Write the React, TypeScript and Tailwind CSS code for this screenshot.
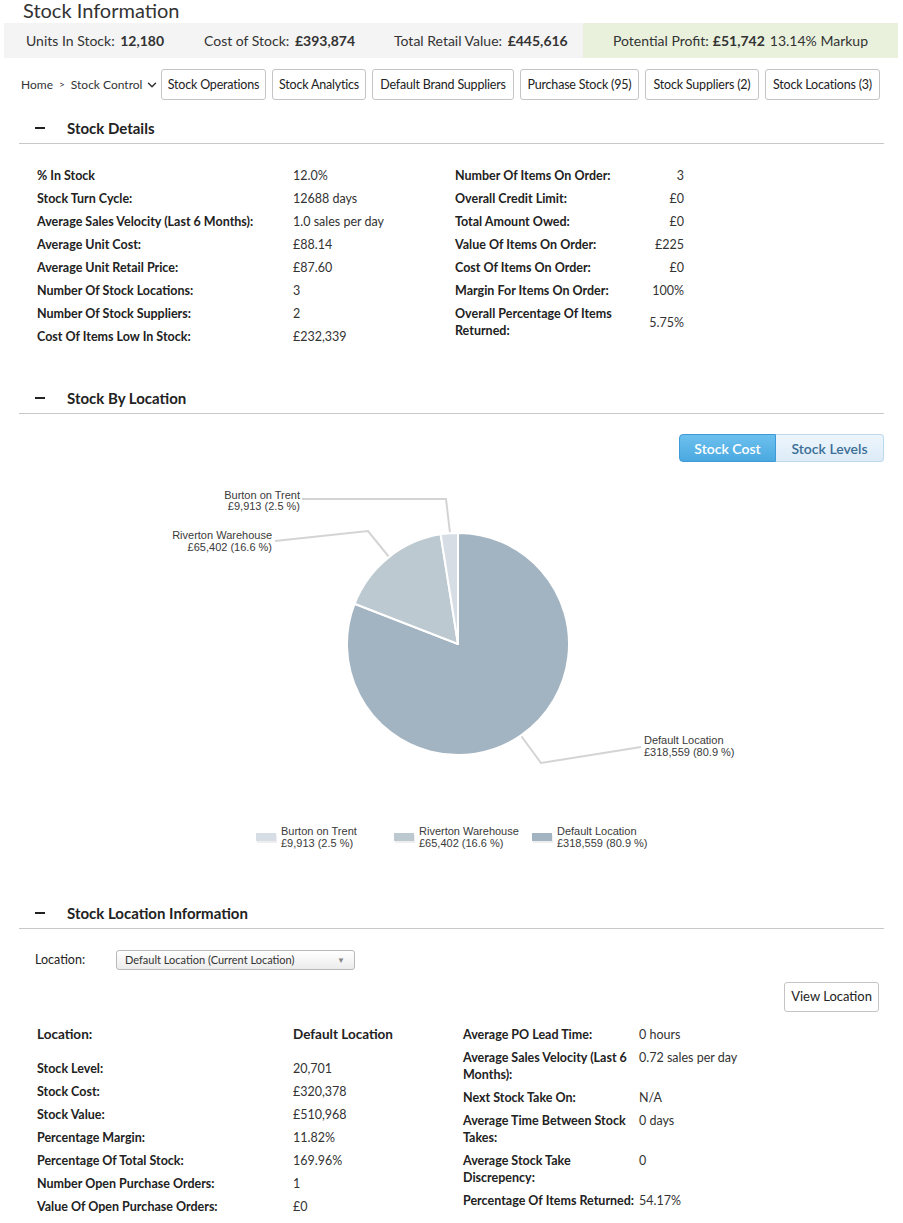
import { ChevronDown } from "lucide-react";

const statsLeft = [
  { label: "Units In Stock:", value: "12,180", w: "w-[178px]" },
  { label: "Cost of Stock:", value: "£393,874", w: "w-[190px]" },
  { label: "Total Retail Value:", value: "£445,616", w: "w-[180px]" },
];

const navButtons = [
  { label: "Stock Operations", w: "w-[105px]" },
  { label: "Stock Analytics", w: "w-[94px]" },
  { label: "Default Brand Suppliers", w: "w-[142px]" },
  { label: "Purchase Stock (95)", w: "w-[119px]" },
  { label: "Stock Suppliers (2)", w: "w-[114px]" },
  { label: "Stock Locations (3)", w: "w-[115px]" },
];

const detailsLeft = [
  ["% In Stock", "12.0%"],
  ["Stock Turn Cycle:", "12688 days"],
  ["Average Sales Velocity (Last 6 Months):", "1.0 sales per day"],
  ["Average Unit Cost:", "£88.14"],
  ["Average Unit Retail Price:", "£87.60"],
  ["Number Of Stock Locations:", "3"],
  ["Number Of Stock Suppliers:", "2"],
  ["Cost Of Items Low In Stock:", "£232,339"],
];

const detailsRight = [
  ["Number Of Items On Order:", "3"],
  ["Overall Credit Limit:", "£0"],
  ["Total Amount Owed:", "£0"],
  ["Value Of Items On Order:", "£225"],
  ["Cost Of Items On Order:", "£0"],
  ["Margin For Items On Order:", "100%"],
  ["Overall Percentage Of Items|Returned:", "5.75%"],
];

const locationLeft = [
  ["Stock Level:", "20,701"],
  ["Stock Cost:", "£320,378"],
  ["Stock Value:", "£510,968"],
  ["Percentage Margin:", "11.82%"],
  ["Percentage Of Total Stock:", "169.96%"],
  ["Number Open Purchase Orders:", "1"],
  ["Value Of Open Purchase Orders:", "£0"],
];

const locationRight = [
  ["Average PO Lead Time:", "0 hours"],
  ["Average Sales Velocity (Last 6|Months):", "0.72 sales per day"],
  ["Next Stock Take On:", "N/A"],
  ["Average Time Between Stock|Takes:", "0 days"],
  ["Average Stock Take|Discrepency:", "0"],
  ["Percentage Of Items Returned:", "54.17%"],
];

function Lines({ text }: { text: string }) {
  const parts = text.split("|");
  return (
    <>
      {parts.map((p, i) => (
        <span key={i} className="block whitespace-nowrap">
          {p}
        </span>
      ))}
    </>
  );
}

function SectionHeader({ title }: { title: string }) {
  return (
    <div className="flex h-[31px] items-center border-b border-[#c8c8c8]">
      <span className="ml-[16px] block h-[2px] w-[10px] bg-[#222]" />
      <span className="ml-[22px] text-[15px] font-bold text-[#222]">{title}</span>
    </div>
  );
}

function Chart() {
  const legend = [
    { x: 256, name: "Burton on Trent", val: "£9,913 (2.5 %)", fill: "#d6dde4" },
    { x: 394, name: "Riverton Warehouse", val: "£65,402 (16.6 %)", fill: "#bdc9d1" },
    { x: 532, name: "Default Location", val: "£318,559 (80.9 %)", fill: "#a2b3c1" },
  ];
  return (
    <svg
      width={865}
      height={436}
      viewBox="19 462 865 436"
      className="block"
      style={{ fontFamily: '"Liberation Sans", Arial, sans-serif' }}
    >
      <g fill="none" stroke="#d4d4d4" strokeWidth={2}>
        <polyline points="302,499 446,499 450,533" />
        <polyline points="275,541 368,531 389,557" />
        <polyline points="519,733 541,763 641,747" />
      </g>
      <g stroke="#fff" strokeWidth={2} strokeLinejoin="round">
        <path d="M458,644 L458,533 A111,111 0 1 1 354.54,603.8 Z" fill="#a2b3c1" />
        <path d="M458,644 L354.54,603.8 A111,111 0 0 1 440.64,534.37 Z" fill="#bdc9d1" />
        <path d="M458,644 L440.64,534.37 A111,111 0 0 1 458,533 Z" fill="#d6dde4" />
      </g>
      <g fontSize={11} fill="#3a3a3a">
        <text x={300} y={499} textAnchor="end">Burton on Trent</text>
        <text x={300} y={510} textAnchor="end">£9,913 (2.5 %)</text>
        <text x={272} y={539} textAnchor="end">Riverton Warehouse</text>
        <text x={272} y={551} textAnchor="end">£65,402 (16.6 %)</text>
        <text x={644} y={744}>Default Location</text>
        <text x={644} y={756}>£318,559 (80.9 %)</text>
      </g>
      {legend.map((l) => (
        <g key={l.name}>
          <rect x={l.x + 1} y={835} width={20} height={8} fill="#eeeeee" />
          <rect x={l.x} y={833} width={20} height={8} fill={l.fill} />
          <text x={l.x + 25} y={835} fontSize={11} fill="#3a3a3a">{l.name}</text>
          <text x={l.x + 25} y={847} fontSize={11} fill="#3a3a3a">{l.val}</text>
        </g>
      ))}
    </svg>
  );
}

export default function App() {
  return (
    <div
      className="w-[903px] bg-white pb-[10px] text-[#222]"
      style={{ fontFamily: "Lato, 'Noto Sans', sans-serif" }}
    >
      <h1 className="h-[23px] pl-[23px] text-[20px] leading-[21px] text-[#333]">Stock Information</h1>

      {/* summary bar */}
      <div className="ml-[4px] flex h-[35px] w-[894px] text-[14px] text-[#333]">
        <div className="flex flex-1 items-center bg-[#f4f4f4] pl-[22px]">
          {statsLeft.map((s) => (
            <div key={s.label} className={s.w}>
              {s.label} <span className="ml-[2px] font-bold">{s.value}</span>
            </div>
          ))}
        </div>
        <div className="flex w-[315px] items-center justify-center bg-[#e9f1dd]">
          Potential Profit: <span className="ml-[4px] font-bold">£51,742</span>
          <span className="ml-[5px]">13.14% Markup</span>
        </div>
      </div>

      {/* nav */}
      <div className="mt-[11px] flex h-[31px] items-center pl-[21px]">
        <div className="flex w-[140px] items-center whitespace-nowrap text-[12px] text-[#333]">
          <span>Home</span>
          <span className="mx-[6px] text-[10px]">&gt;</span>
          <span>Stock Control</span>
          <ChevronDown size={14} strokeWidth={2.5} className="ml-[3px]" />
        </div>
        <div className="flex gap-[6px]">
          {navButtons.map((b) => (
            <button
              key={b.label}
              className={`${b.w} flex h-[31px] items-center justify-center whitespace-nowrap rounded-[3px] border border-[#c4c4c4] bg-white pt-[2px] text-[12.5px] tracking-[-0.2px] text-[#222]`}
            >
              {b.label}
            </button>
          ))}
        </div>
      </div>

      {/* Stock Details */}
      <section className="ml-[19px] mt-[13px] w-[865px]">
        <SectionHeader title="Stock Details" />
        <div className="mt-[20px] flex pl-[18px] text-[12.5px]">
          <div className="w-[418px]">
            {detailsLeft.map(([l, v]) => (
              <div key={l} className="flex min-h-[23px] items-center leading-[17px]">
                <div className="w-[256px] font-bold">{l}</div>
                <div className="text-[#333]">{v}</div>
              </div>
            ))}
          </div>
          <div>
            {detailsRight.map(([l, v]) => (
              <div key={l} className="flex min-h-[23px] items-center py-[3px] leading-[17px]">
                <div className="w-[170px] font-bold">
                  <Lines text={l} />
                </div>
                <div className="w-[59px] text-right text-[#333]">{v}</div>
              </div>
            ))}
          </div>
        </div>
      </section>

      {/* Stock By Location */}
      <section className="ml-[19px] mt-[35px] w-[865px]">
        <SectionHeader title="Stock By Location" />
        <div className="mt-[20px] flex justify-end">
          <button className="h-[28px] w-[97px] rounded-l-[4px] border border-[#3d9ad6] bg-gradient-to-b from-[#6cc0ee] to-[#4aa9e0] text-[14px] font-semibold text-white">
            Stock Cost
          </button>
          <button className="h-[28px] w-[108px] rounded-r-[4px] border border-l-0 border-[#bcd9ee] bg-gradient-to-b from-[#eef6fc] to-[#dcebf7] text-[14px] font-semibold text-[#3b6e96]">
            Stock Levels
          </button>
        </div>
        <Chart />
      </section>

      {/* Stock Location Information */}
      <section className="ml-[19px] w-[865px]">
        <SectionHeader title="Stock Location Information" />
        <div className="mt-[21px] flex h-[20px] items-center pl-[16px] text-[12.5px]">
          <span className="w-[81px]">Location:</span>
          <div className="flex h-[20px] w-[239px] items-center justify-between rounded-[3px] border border-[#b9b9b9] bg-gradient-to-b from-white to-[#ececec] pl-[8px] pr-[9px] text-[11px] text-[#333]">
            <span>Default Location (Current Location)</span>
            <span className="text-[8px] text-[#888]">▼</span>
          </div>
        </div>
        <div className="mt-[12px] flex justify-end pr-[5px]">
          <button className="h-[30px] rounded-[3px] border border-[#c4c4c4] bg-white px-[6px] text-[13px] text-[#222]">
            View Location
          </button>
        </div>
        <div className="mt-[11px] flex pl-[18px] text-[12.5px]">
          <div className="w-[426px]">
            <div className="mb-[11px] flex min-h-[23px] items-center text-[13.5px] font-bold">
              <div className="w-[256px]">Location:</div>
              <div>Default Location</div>
            </div>
            {locationLeft.map(([l, v]) => (
              <div key={l} className="flex min-h-[23px] items-center leading-[17px]">
                <div className="w-[256px] font-bold">{l}</div>
                <div className="text-[#333]">{v}</div>
              </div>
            ))}
          </div>
          <div>
            {locationRight.map(([l, v]) => (
              <div key={l} className="flex min-h-[23px] items-start py-[3px] leading-[17px]">
                <div className="w-[176px] font-bold">
                  <Lines text={l} />
                </div>
                <div className="text-[#333]">{v}</div>
              </div>
            ))}
          </div>
        </div>
      </section>
    </div>
  );
}
